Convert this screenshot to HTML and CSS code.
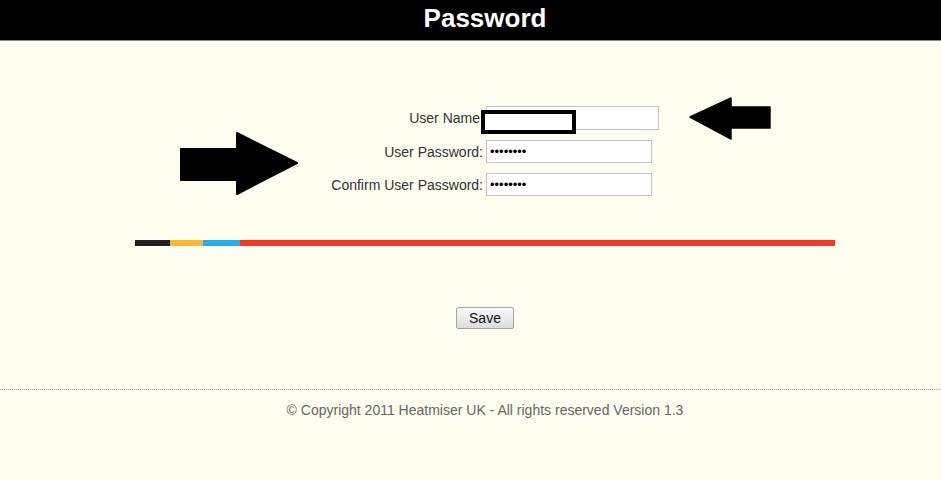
FILE: index.html
```html
<!DOCTYPE html>
<html>
<head>
<meta charset="utf-8">
<title>Password</title>
<link rel="stylesheet" href="styles.css">
</head>
<body>
<header class="topbar"><h1 class="title">Password</h1></header>
<main class="page">
  <form class="pwform">
    <label class="lbl lbl-name" for="un">User Name</label>
    <input class="field field-name" id="un" type="text">
    <label class="lbl" for="pw">User Password:</label>
    <input class="field" id="pw" type="password" value="12345678">
    <label class="lbl" for="cpw">Confirm User Password:</label>
    <input class="field" id="cpw" type="password" value="12345678">
  </form>
  <div class="colorbar">
    <span class="seg seg-black"></span><span class="seg seg-yellow"></span><span class="seg seg-blue"></span><span class="seg seg-red"></span>
  </div>
  <div class="actions"><button type="button" class="savebtn">Save</button></div>
</main>
<footer class="footer">
  <p class="copy">© Copyright 2011 Heatmiser UK - All rights reserved Version 1.3</p>
</footer>

<div class="redact"></div>
<svg class="arrow arrow-right" width="120" height="64" viewBox="0 0 120 64">
  <path d="M2 17 L58 17 L58 1 L118 31 L58 62 L58 48 L2 48 Z" fill="#000" stroke="#000" stroke-width="2" stroke-linejoin="round"/>
</svg>
<svg class="arrow arrow-left" width="84" height="44" viewBox="0 0 84 44">
  <path d="M1 20 L42 1 L42 10 L81 10 L81 31 L42 31 L42 42 Z" fill="#000" stroke="#000" stroke-width="1.5" stroke-linejoin="round"/>
</svg>
</body>
</html>
```

FILE: styles.css
```css
* { box-sizing: border-box; }
html, body { margin: 0; padding: 0; }
body {
  position: relative;
  background: #fdfdf0;
  font-family: "Liberation Sans", Arial, sans-serif;
  min-height: 480px;
  overflow: hidden;
}
.topbar {
  height: 41px;
  background: #000;
  border-bottom: 1px solid #8a8a80;
  padding-left: 29px;
  display: flex;
  align-items: center;
  justify-content: center;
}
.title {
  margin: 0;
  color: #fff;
  font-size: 26px;
  font-weight: bold;
  line-height: 30px;
  padding-bottom: 4px;
}
.page {
  padding-left: 29px;
  padding-top: 65px;
}
.pwform {
  display: grid;
  grid-template-columns: 454px 173px;
  column-gap: 3px;
  row-gap: 10px;
  align-items: center;
}
.lbl {
  text-align: right;
  font-size: 14px;
  color: #333;
}
.lbl-name { padding-right: 3px; }
.field {
  width: 166px;
  height: 23px;
  margin: 0;
  padding: 1px 3px;
  border: 1px solid #c4c4c4;
  background: #fff;
  font-size: 13px;
  font-family: "Liberation Sans", Arial, sans-serif;
  color: #000;
}
.field-name { width: 173px; height: 24px; }
.colorbar {
  display: flex;
  width: 700px;
  height: 6px;
  margin: 44px auto 0;
}
.seg { display: block; height: 6px; }
.seg-black { width: 35px; background: #222021; }
.seg-yellow { width: 33px; background: #f6b83c; }
.seg-blue { width: 37px; background: #27ade3; }
.seg-red { flex: 1; background: #ee3a2a; }
.actions {
  display: flex;
  justify-content: center;
  margin-top: 61px;
}
.savebtn {
  width: 58px;
  height: 22px;
  padding: 0;
  border: 1px solid #a3a3a3;
  border-radius: 2px;
  background: linear-gradient(#f8f8f8, #dcdcdc);
  font-family: "Liberation Sans", Arial, sans-serif;
  font-size: 14px;
  color: #111;
}
.footer {
  margin-top: 60px;
  border-top: 1px dotted #a9a9a0;
  padding-left: 29px;
  text-align: center;
}
.copy {
  margin: 12px 0 0;
  font-size: 14px;
  line-height: 16px;
  color: #666;
}
.redact {
  position: absolute;
  left: 481px;
  top: 110px;
  width: 95px;
  height: 24px;
  border: 4px solid #000;
  background: #fff;
}
.arrow { position: absolute; }
.arrow-right { left: 179px; top: 132px; }
.arrow-left { left: 689px; top: 97px; }
```
